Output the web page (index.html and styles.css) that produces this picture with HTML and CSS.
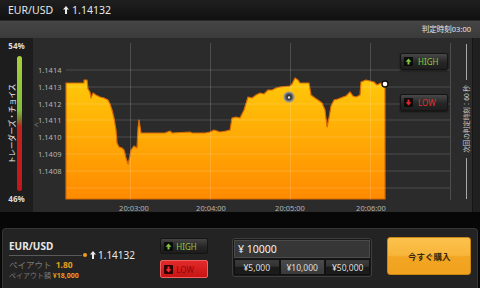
FILE: index.html
```html
<!DOCTYPE html>
<html lang="ja">
<head>
    <meta charset="UTF-8">
    <title>EUR/USD</title>
    <link rel="stylesheet" href="styles.css">
</head>
<body>
    <div class="app">
        <header class="topbar">
            <span class="topbar-pair">EUR/USD</span>
            <span class="topbar-rate">
                <svg class="arrow" width="6" height="8" viewBox="0 0 6 8"><polygon points="3,0 6,3.5 4,3.5 4,8 2,8 2,3.5 0,3.5" fill="#e8e8e8"/></svg>
                1.14132
            </span>
        </header>

        <div class="subbar">判定時刻03:00</div>

        <section class="main">
            <aside class="choice">
                <div class="pct pct-top">54%</div>
                <div class="choice-body">
                    <span class="choice-label">トレーダーズ・チョイス</span>
                    <div class="meter"></div>
                </div>
                <div class="pct pct-bottom">46%</div>
            </aside>

            <div class="plot">
                <svg class="chart" width="439" height="174" viewBox="33 38 439 174">
                    <defs>
                        <linearGradient id="fill" x1="0" y1="0" x2="0" y2="1">
                            <stop offset="0" stop-color="#ffc90a"/>
                            <stop offset="1" stop-color="#ff8a00"/>
                        </linearGradient>
                    </defs>
                    <rect x="33" y="38" width="439" height="174" fill="#2b2b2b"/>

                    <path d="M66,199 L66,83 L84,83 L84,80 L87,80 L88,89 L90,92 L91,98 L93,93 L96,95 L100,97 L104,98 L108,100 L110,104 L112,110 L114,118 L116,130 L117,143 L119,147 L122,148 L124,150 L126,158 L128,164 L130,156 L131,150 L134,146 L137,148 L138,128 L139,120 L141,133 L165,133 L170,131 L172,133 L190,132 L192,133 L205,133 L210,132 L214,130 L220,132 L226,131 L230,130 L232,118 L236,117 L240,118 L244,110 L248,97 L252,98 L256,95 L260,93 L264,94 L268,90 L272,90 L276,88 L280,87 L290,86 L292,84 L295,78 L298,80 L300,83 L309,83 L311,95 L315,98 L318,100 L322,103 L325,110 L327,127 L329,118 L331,106 L334,100 L338,99 L343,97 L346,96 L350,92 L353,96 L356,97 L360,95 L361,82 L366,80 L370,81 L374,82 L377,85 L381,83 L385,84 L385,199 Z"
                          fill="url(#fill)" stroke="#d96a00" stroke-width="1.2" stroke-linejoin="round"/>

                    <g class="grid">
                        <line x1="66" y1="70" x2="450" y2="70"/>
                        <line x1="66" y1="87" x2="450" y2="87"/>
                        <line x1="66" y1="104" x2="450" y2="104"/>
                        <line x1="66" y1="120" x2="450" y2="120"/>
                        <line x1="66" y1="137" x2="450" y2="137"/>
                        <line x1="66" y1="154" x2="450" y2="154"/>
                        <line x1="66" y1="171" x2="450" y2="171"/>
                        <line x1="66" y1="188" x2="450" y2="188"/>
                        <line x1="130.5" y1="43" x2="130.5" y2="200"/>
                        <line x1="210.5" y1="43" x2="210.5" y2="200"/>
                        <line x1="290.5" y1="43" x2="290.5" y2="200"/>
                        <line x1="370.5" y1="43" x2="370.5" y2="200"/>
                        <line x1="450.5" y1="43" x2="450.5" y2="200"/>
                    </g>

                    <g class="axis-y">
                        <text x="38" y="73">1.1414</text>
                        <text x="38" y="90">1.1413</text>
                        <text x="38" y="107">1.1412</text>
                        <text x="38" y="123">1.1411</text>
                        <text x="38" y="140">1.1410</text>
                        <text x="38" y="157">1.1409</text>
                        <text x="38" y="174">1.1408</text>
                    </g>
                    <g class="axis-x">
                        <text x="134" y="211">20:03:00</text>
                        <text x="211" y="211">20:04:00</text>
                        <text x="290" y="211">20:05:00</text>
                        <text x="371" y="211">20:06:00</text>
                    </g>
                    <text class="collapse" x="34" y="128">&lt;</text>

                    <circle cx="289" cy="97" r="5" fill="#6a6a6a" stroke="#9a9a9a" stroke-width="1.2"/>
                    <circle cx="289" cy="97" r="3" fill="#3a3a3a"/>
                    <circle cx="289" cy="97.5" r="1.2" fill="#e0e0e0"/>
                    <circle cx="385" cy="84" r="3" fill="#ffffff" stroke="#111" stroke-width="1.4"/>

                    <line class="timer-line" x1="466.5" y1="44" x2="466.5" y2="80"/>
                    <line class="timer-line" x1="466.5" y1="158" x2="466.5" y2="199"/>
                    <text class="timer" x="466" y="119" transform="rotate(-90 466 119)">次回の判定時刻：60 秒</text>
                </svg>

                <button class="side side-high">
                    <svg width="9" height="9" viewBox="0 0 9 9"><rect width="9" height="9" rx="1" fill="#0b0b0b"/><polygon points="4.5,1.5 7.5,4.8 5.5,4.8 5.5,7.5 3.5,7.5 3.5,4.8 1.5,4.8" fill="#7fc241"/></svg>
                    HIGH
                </button>
                <button class="side side-low">
                    <svg width="9" height="9" viewBox="0 0 9 9"><rect width="9" height="9" rx="1" fill="#0b0b0b"/><polygon points="4.5,7.5 7.5,4.2 5.5,4.2 5.5,1.5 3.5,1.5 3.5,4.2 1.5,4.2" fill="#e0262b"/></svg>
                    LOW
                </button>
            </div>

            <div class="edge"></div>
        </section>

        <section class="trade">
            <div class="pair">
                <div class="pair-name">EUR/USD</div>
                <div class="pair-rate">
                    <span class="rule"></span>
                    <span class="dot"></span>
                    <svg class="arrow" width="6" height="8" viewBox="0 0 6 8"><polygon points="3,0 6,3.5 4,3.5 4,8 2,8 2,3.5 0,3.5" fill="#e8e8e8"/></svg>
                    <span class="pair-price">1.14132</span>
                </div>
                <div class="payout">ペイアウト <b>1.80</b></div>
                <div class="payout-sum">ペイアウト額 <b>¥18,000</b></div>
            </div>

            <div class="direction">
                <button class="dir dir-high">
                    <svg width="9" height="9" viewBox="0 0 9 9"><rect width="9" height="9" rx="1" fill="#0b0b0b"/><polygon points="4.5,1.5 7.5,4.8 5.5,4.8 5.5,7.5 3.5,7.5 3.5,4.8 1.5,4.8" fill="#7fc241"/></svg>
                    HIGH
                </button>
                <button class="dir dir-low">
                    <svg width="9" height="9" viewBox="0 0 9 9"><rect width="9" height="9" rx="1" fill="#2a0000"/><polygon points="4.5,7.5 7.5,4.2 5.5,4.2 5.5,1.5 3.5,1.5 3.5,4.2 1.5,4.2" fill="#ff2a2a"/></svg>
                    LOW
                </button>
            </div>

            <div class="amount">
                <div class="amount-input">¥ 10000</div>
                <div class="presets">
                    <button class="preset">¥5,000</button>
                    <button class="preset active">¥10,000</button>
                    <button class="preset">¥50,000</button>
                </div>
            </div>

            <button class="buy">今すぐ購入</button>
        </section>
    </div>
</body>
</html>
```

FILE: styles.css
```css
* {
    margin: 0;
    padding: 0;
    box-sizing: border-box;
}

body {
    font-family: 'Noto Sans', 'Noto Sans CJK JP', sans-serif;
    background: #070707;
    color: #e8e8e8;
    width: 480px;
    height: 288px;
    overflow: hidden;
}

button {
    font-family: inherit;
    border: none;
    cursor: pointer;
}

.topbar {
    height: 20px;
    display: flex;
    align-items: center;
    gap: 10px;
    padding-left: 8px;
    background: linear-gradient(#1f1f1f, #101010);
    font-size: 10.5px;
    line-height: 1;
}

.topbar-rate {
    display: flex;
    align-items: center;
    gap: 3px;
}

.subbar {
    height: 18px;
    padding-right: 9px;
    background: linear-gradient(#454545, #3b3b3b);
    border-top: 1px solid #2a2a2a;
    font-size: 7.5px;
    line-height: 17px;
    text-align: right;
    color: #e6e6e6;
}

.main {
    display: flex;
    height: 174px;
}

.choice {
    width: 33px;
    background: #1d1d1d;
    display: flex;
    flex-direction: column;
    align-items: center;
}

.pct {
    font-size: 8px;
    font-weight: 700;
    line-height: 10px;
    color: #dcdcdc;
}

.pct-top {
    margin-top: 3px;
    margin-bottom: 5px;
}

.pct-bottom {
    margin-top: 3px;
}

.choice-body {
    display: flex;
    align-items: center;
    gap: 1px;
    padding-right: 3px;
}

.choice-label {
    writing-mode: vertical-rl;
    text-orientation: sideways;
    transform: rotate(180deg);
    font-size: 7.5px;
    line-height: 8px;
    color: #f0f0f0;
    letter-spacing: -0.2px;
}

.meter {
    width: 5px;
    height: 135px;
    border-radius: 3px;
    background: linear-gradient(#a9cf3b 0%, #7fbf3a 40%, #7a7a2a 47%, #c0231f 52%, #c4161c 100%);
}

.plot {
    position: relative;
    width: 439px;
}

.chart {
    display: block;
    font-family: 'Noto Sans', 'Noto Sans CJK JP', sans-serif;
}

.grid line {
    stroke: rgba(255, 255, 255, 0.16);
    stroke-width: 1;
}

.axis-y text,
.axis-x text {
    font-size: 7.5px;
    fill: #b4b4b4;
}

.axis-x text {
    text-anchor: middle;
}

.collapse {
    font-size: 8px;
    fill: #777;
}

.timer-line {
    stroke: #a8a8a8;
    stroke-width: 1;
}

.timer {
    font-size: 6.5px;
    fill: #d0d0d0;
    text-anchor: middle;
    dominant-baseline: central;
}

.side {
    position: absolute;
    left: 367px;
    width: 48px;
    height: 17px;
    display: flex;
    align-items: center;
    gap: 5px;
    padding-left: 3px;
    border: 1px solid #151515;
    border-radius: 2px;
    background: linear-gradient(#484848, #262626 55%, #1e1e1e);
    font-size: 8px;
    box-shadow: 0 1px 2px rgba(0, 0, 0, 0.6);
}

.side-high {
    top: 15px;
    color: #8fcb3a;
}

.side-low {
    top: 56px;
    color: #e0302c;
}

.edge {
    flex: 1;
    background: #202020;
    border-left: 1px solid #161616;
}

.trade {
    height: 60px;
    margin: 16px 2px 0;
    padding: 8px 6px 0;
    display: flex;
    align-items: flex-start;
    background: #232323;
    border: 1px solid #353535;
    border-bottom: none;
    border-radius: 4px 4px 0 0;
}

.pair {
    width: 152px;
}

.pair-name {
    font-size: 10px;
    font-weight: 700;
    line-height: 12px;
    margin-top: 3px;
}

.pair-rate {
    display: flex;
    align-items: center;
    margin-top: -3px;
    height: 12px;
    font-size: 10px;
}

.rule {
    width: 73px;
    height: 1px;
    background: #5a5a5a;
}

.dot {
    width: 4px;
    height: 4px;
    border-radius: 50%;
    background: #f0a020;
    margin: 0 3px 0 1px;
}

.pair-price {
    margin-left: 2px;
}

.payout {
    font-size: 8.5px;
    line-height: 10px;
    margin-top: -1px;
    color: #7a7a7a;
}

.payout b {
    color: #e89e1c;
    margin-left: 2px;
}

.payout-sum {
    font-size: 7px;
    line-height: 11px;
    color: #777;
}

.payout-sum b {
    color: #e89e1c;
}

.direction {
    width: 48px;
    display: flex;
    flex-direction: column;
    gap: 6px;
    margin-top: 1px;
}

.dir {
    height: 16px;
    display: flex;
    align-items: center;
    gap: 3px;
    padding-left: 3px;
    border-radius: 2px;
    font-size: 8px;
}

.dir-high {
    background: linear-gradient(#444, #262626 55%, #1c1c1c);
    border: 1px solid #151515;
    color: #8fcb3a;
}

.dir-low {
    height: 18px;
    background: linear-gradient(#e22a2a, #c81414);
    border: 1px solid #f06060;
    color: #8a0808;
}

.amount {
    width: 141px;
    margin-left: 24px;
    margin-top: 1px;
    padding: 1px;
    border: 1px solid #3e3e3e;
    border-radius: 3px;
    background: #181818;
}

.amount-input {
    height: 18px;
    padding-left: 3px;
    background: #363636;
    border: 1px solid #4a4a4a;
    font-size: 10.5px;
    line-height: 16px;
    color: #f2f2f2;
}

.presets {
    display: flex;
    margin-top: 1px;
}

.preset {
    flex: 1;
    height: 16px;
    background: linear-gradient(#3c3c3c 0%, #333 45%, #1a1a1a 50%, #1c1c1c 100%);
    border: 1px solid #111;
    font-size: 8.5px;
    color: #dedede;
}

.preset.active {
    background: linear-gradient(#4a4a4a, #3a3a3a);
}

.buy {
    width: 84px;
    height: 38px;
    margin-left: 15px;
    border: 1px solid #c98712;
    border-radius: 3px;
    background: linear-gradient(#fcc24e 0%, #f8b53a 48%, #f2a623 52%, #f0a21e 100%);
    font-size: 8.5px;
    font-weight: 700;
    color: #3a2808;
}
```
